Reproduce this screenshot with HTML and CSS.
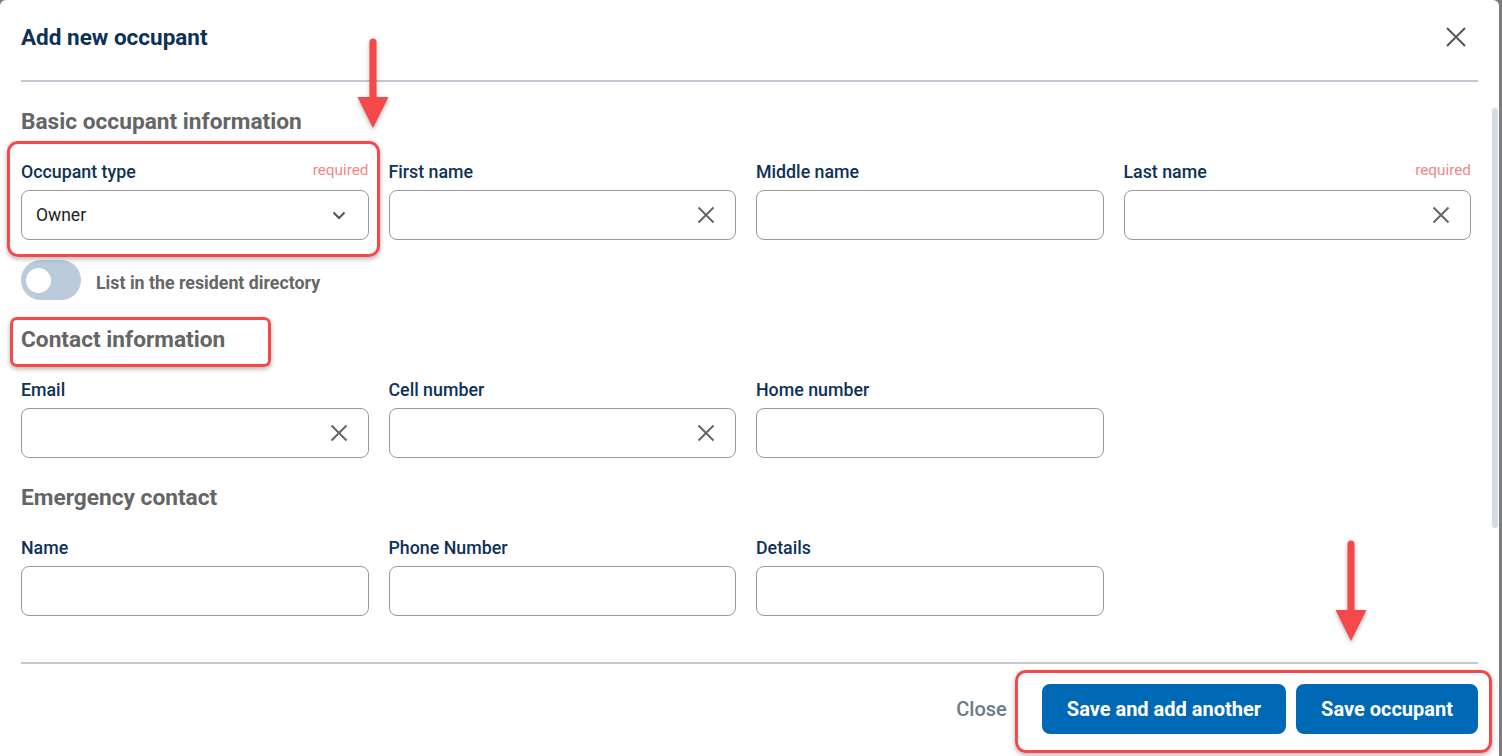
FILE: index.html
```html
<!DOCTYPE html>
<html lang="en">
<head>
<meta charset="utf-8">
<title>Add new occupant</title>
<link rel="stylesheet" href="styles.css">
</head>
<body>
<div class="modal">
  <header class="modal-header">
    <h1 class="modal-title">Add new occupant</h1>
    <button class="icon-btn close-x" aria-label="Close">
      <svg width="20" height="20" viewBox="0 0 20 20"><path d="M1 1 L19 19 M19 1 L1 19" stroke="#555" stroke-width="2" fill="none"/></svg>
    </button>
  </header>

  <div class="modal-body">
    <section class="section">
      <h2 class="section-title">Basic occupant information</h2>
      <div class="grid">
        <div class="field">
          <div class="label-row"><label>Occupant type</label><span class="req">required</span></div>
          <div class="input select">
            <span class="value">Owner</span>
            <svg class="chev" width="14" height="9" viewBox="0 0 14 9"><path d="M1.5 1.5 L7 7 L12.5 1.5" stroke="#555" stroke-width="2" fill="none"/></svg>
          </div>
        </div>
        <div class="field">
          <div class="label-row"><label>First name</label></div>
          <div class="input"><svg class="clear" width="18" height="18" viewBox="0 0 18 18"><path d="M1.5 1.5 L16.5 16.5 M16.5 1.5 L1.5 16.5" stroke="#666" stroke-width="2" fill="none"/></svg></div>
        </div>
        <div class="field">
          <div class="label-row"><label>Middle name</label></div>
          <div class="input"></div>
        </div>
        <div class="field">
          <div class="label-row"><label>Last name</label><span class="req">required</span></div>
          <div class="input"><svg class="clear" width="18" height="18" viewBox="0 0 18 18"><path d="M1.5 1.5 L16.5 16.5 M16.5 1.5 L1.5 16.5" stroke="#666" stroke-width="2" fill="none"/></svg></div>
        </div>
      </div>
      <div class="toggle-row">
        <span class="toggle"><span class="knob"></span></span>
        <span class="toggle-label">List in the resident directory</span>
      </div>
    </section>

    <section class="section">
      <h2 class="section-title">Contact information</h2>
      <div class="grid">
        <div class="field">
          <div class="label-row"><label>Email</label></div>
          <div class="input"><svg class="clear" width="18" height="18" viewBox="0 0 18 18"><path d="M1.5 1.5 L16.5 16.5 M16.5 1.5 L1.5 16.5" stroke="#666" stroke-width="2" fill="none"/></svg></div>
        </div>
        <div class="field">
          <div class="label-row"><label>Cell number</label></div>
          <div class="input"><svg class="clear" width="18" height="18" viewBox="0 0 18 18"><path d="M1.5 1.5 L16.5 16.5 M16.5 1.5 L1.5 16.5" stroke="#666" stroke-width="2" fill="none"/></svg></div>
        </div>
        <div class="field">
          <div class="label-row"><label>Home number</label></div>
          <div class="input"></div>
        </div>
      </div>
    </section>

    <section class="section">
      <h2 class="section-title">Emergency contact</h2>
      <div class="grid">
        <div class="field">
          <div class="label-row"><label>Name</label></div>
          <div class="input"></div>
        </div>
        <div class="field">
          <div class="label-row"><label>Phone Number</label></div>
          <div class="input"></div>
        </div>
        <div class="field">
          <div class="label-row"><label>Details</label></div>
          <div class="input"></div>
        </div>
      </div>
    </section>
  </div>

  <footer class="modal-footer">
    <button class="btn-link">Close</button>
    <button class="btn-primary">Save and add another</button>
    <button class="btn-primary">Save occupant</button>
  </footer>

  <div class="scroll-thumb"></div>

  <div class="mark mark-type"></div>
  <div class="mark mark-contact"></div>
  <div class="mark mark-buttons"></div>

  <svg class="arrow arrow-1" width="40" height="96" viewBox="0 0 40 96"><path d="M20 4 L20 62" stroke="#f5484a" stroke-width="7" stroke-linecap="round" fill="none"/><path d="M4.5 59 L35.5 59 L20 90 Z" fill="#f5484a"/></svg>
  <svg class="arrow arrow-2" width="40" height="106" viewBox="0 0 40 106"><path d="M20 4 L20 72" stroke="#f5484a" stroke-width="7" stroke-linecap="round" fill="none"/><path d="M4.5 70 L35.5 70 L20 101 Z" fill="#f5484a"/></svg>
</div>
</body>
</html>
```

FILE: styles.css
```css
* { box-sizing: border-box; }
html, body { margin: 0; padding: 0; }
body {
  width: 1502px;
  height: 756px;
  background: #7d7d7d;
  font-family: Roboto, "Liberation Sans", Arial, sans-serif;
  overflow: hidden;
}
.modal {
  position: relative;
  width: 1499px;
  height: 756px;
  background: #fff;
  border-radius: 6px 6px 0 0;
  display: flex;
  flex-direction: column;
  overflow: hidden;
}
.modal-header {
  margin: 0 21px 0 21px;
  height: 82px;
  border-bottom: 2px solid #c3c7d1;
  display: flex;
  align-items: center;
  justify-content: space-between;
  padding-bottom: 6px;
}
.modal-title {
  margin: 0;
  font-size: 22.5px;
  font-weight: 700;
  color: #0e3257;
  line-height: 28px;
}
.icon-btn {
  border: 0;
  background: none;
  padding: 0;
  margin-right: 12px;
  display: flex;
}
.modal-body {
  flex: 1;
  padding: 26px 28px 0 21px;
}
.section-title {
  margin: 0;
  font-size: 22.7px;
  font-weight: 700;
  color: #656565;
  line-height: 28px;
}
.section + .section { margin-top: 26px; }
.grid {
  margin-top: 25px;
  display: grid;
  grid-template-columns: repeat(4, 347.5px);
  column-gap: 20px;
}
.field { display: flex; flex-direction: column; }
.label-row {
  display: flex;
  justify-content: space-between;
  align-items: center;
  height: 20px;
  margin-bottom: 9px;
}
.label-row label {
  font-size: 17.8px;
  font-weight: 500;
  color: #0e3257;
}
.req {
  font-size: 15.3px;
  color: #f58687;
  margin-top: -3px;
}
.input {
  height: 50px;
  border: 1px solid #9a9a9a;
  border-radius: 8px;
  display: flex;
  align-items: center;
  justify-content: flex-end;
  padding: 0 20px 0 14px;
}
.select { justify-content: space-between; padding-right: 22px; }
.select .value {
  font-size: 17.5px;
  color: #222;
}
.toggle-row {
  margin-top: 20px;
  display: flex;
  align-items: center;
  gap: 15px;
  height: 40px;
}
.toggle {
  width: 60px;
  height: 40px;
  border-radius: 20px;
  background: #bccbdb;
  display: flex;
  align-items: center;
  padding-left: 5px;
}
.knob {
  width: 25px;
  height: 25px;
  border-radius: 50%;
  background: #fff;
}
.toggle-label {
  font-size: 17.8px;
  font-weight: 700;
  color: #666;
  margin-top: 4px;
}
.modal-footer {
  margin: 0 21px 0 21px;
  border-top: 2px solid #c3c7d1;
  height: 94px;
  padding-top: 20px;
  display: flex;
  justify-content: flex-end;
  align-items: flex-start;
  gap: 10px;
}
.btn-link {
  border: 0;
  background: none;
  font-family: inherit;
  font-size: 20px;
  font-weight: 500;
  color: #6d7985;
  height: 50px;
  padding: 0;
  margin-right: 25px;
}
.btn-primary {
  border: 0;
  background: #0069b6;
  color: #fff;
  font-family: inherit;
  font-size: 20px;
  font-weight: 700;
  height: 50px;
  border-radius: 8px;
  padding: 0 25px;
}
.scroll-thumb {
  position: absolute;
  left: 1492px;
  top: 108px;
  width: 6px;
  height: 420px;
  border-radius: 3px;
  background: #d6dbe2;
}
.mark {
  position: absolute;
  border: 3px solid #f5484a;
  border-radius: 11px;
  box-shadow: 0 2px 5px rgba(0,0,0,0.3);
}
.mark-type { left: 7px; top: 141px; width: 373px; height: 116px; }
.mark-contact { left: 10px; top: 317px; width: 261px; height: 50px; border-radius: 7px; }
.mark-buttons { left: 1015px; top: 670px; width: 477px; height: 83px; }
.arrow {
  position: absolute;
  filter: drop-shadow(0 2px 2px rgba(0,0,0,0.3));
}
.arrow-1 { left: 353px; top: 38px; }
.arrow-2 { left: 1331px; top: 540px; }
```
